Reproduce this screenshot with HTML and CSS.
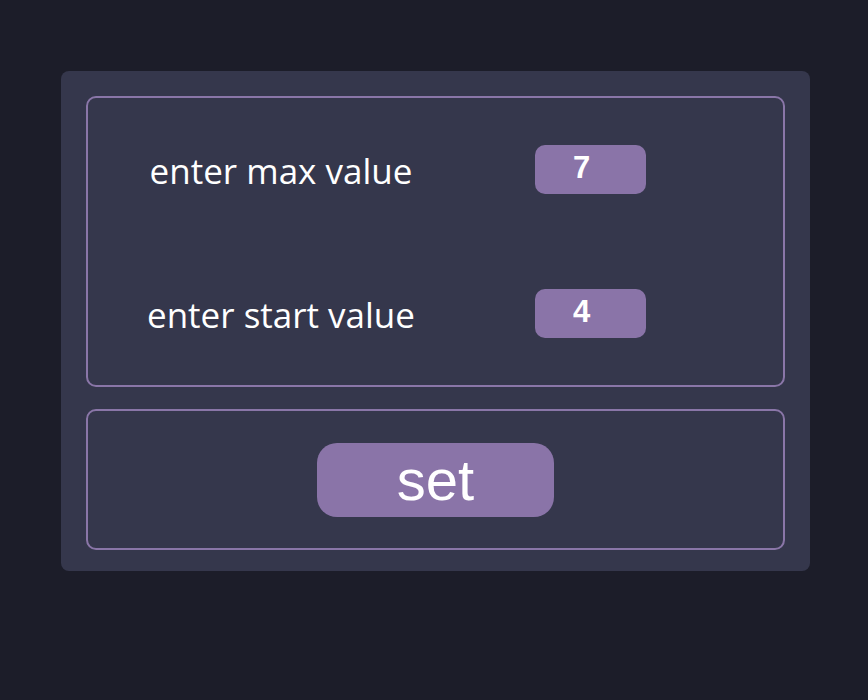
FILE: index.html
```html
<!DOCTYPE html>
<html lang="en">
<head>
<meta charset="utf-8">
<title>Counter settings</title>
<link rel="stylesheet" href="styles.css">
</head>
<body>
<div class="page">
  <div class="card">
    <div class="box settings">
      <div class="row">
        <span class="label">enter max value</span>
        <input class="value" type="text" value="7">
      </div>
      <div class="row">
        <span class="label">enter start value</span>
        <input class="value" type="text" value="4">
      </div>
    </div>
    <div class="box actions">
      <button class="btn">set</button>
    </div>
  </div>
</div>
</body>
</html>
```

FILE: styles.css
```css
html, body {
  margin: 0;
  padding: 0;
  background: #1c1d29;
}
.page {
  padding: 71px 0 0 61px;
}
.card {
  width: 749px;
  height: 500px;
  box-sizing: border-box;
  background: #35374c;
  border-radius: 8px;
  padding: 25px 25px 21px 25px;
  display: flex;
  flex-direction: column;
  gap: 22px;
}
.box {
  border: 2px solid #8a76a8;
  border-radius: 10px;
}
.settings {
  height: 291px;
  box-sizing: border-box;
  padding: 47px 0;
  display: flex;
  flex-direction: column;
  gap: 95px;
}
.row {
  display: flex;
  align-items: center;
  height: 49px;
}
.label {
  width: 386px;
  text-align: center;
  font-family: "Open Sans", "Noto Sans", sans-serif;
  font-size: 35px;
  color: #ffffff;
  margin-top: 2px;
}
.value {
  margin-left: 61px;
  width: 111px;
  height: 49px;
  box-sizing: border-box;
  border: none;
  border-radius: 10px;
  background: #8a74a8;
  color: #ffffff;
  font-family: "Liberation Sans", Arial, sans-serif;
  font-weight: bold;
  font-size: 31px;
  padding: 0 0 4px 38px;
  outline: none;
}
.actions {
  height: 142px;
  box-sizing: border-box;
  display: flex;
  align-items: center;
  justify-content: center;
}
.btn {
  width: 237px;
  height: 74px;
  border: none;
  border-radius: 20px;
  background: #8a74a8;
  color: #ffffff;
  font-family: "Liberation Sans", Arial, sans-serif;
  font-size: 58px;
  padding: 0;
  line-height: 1;
}
```
